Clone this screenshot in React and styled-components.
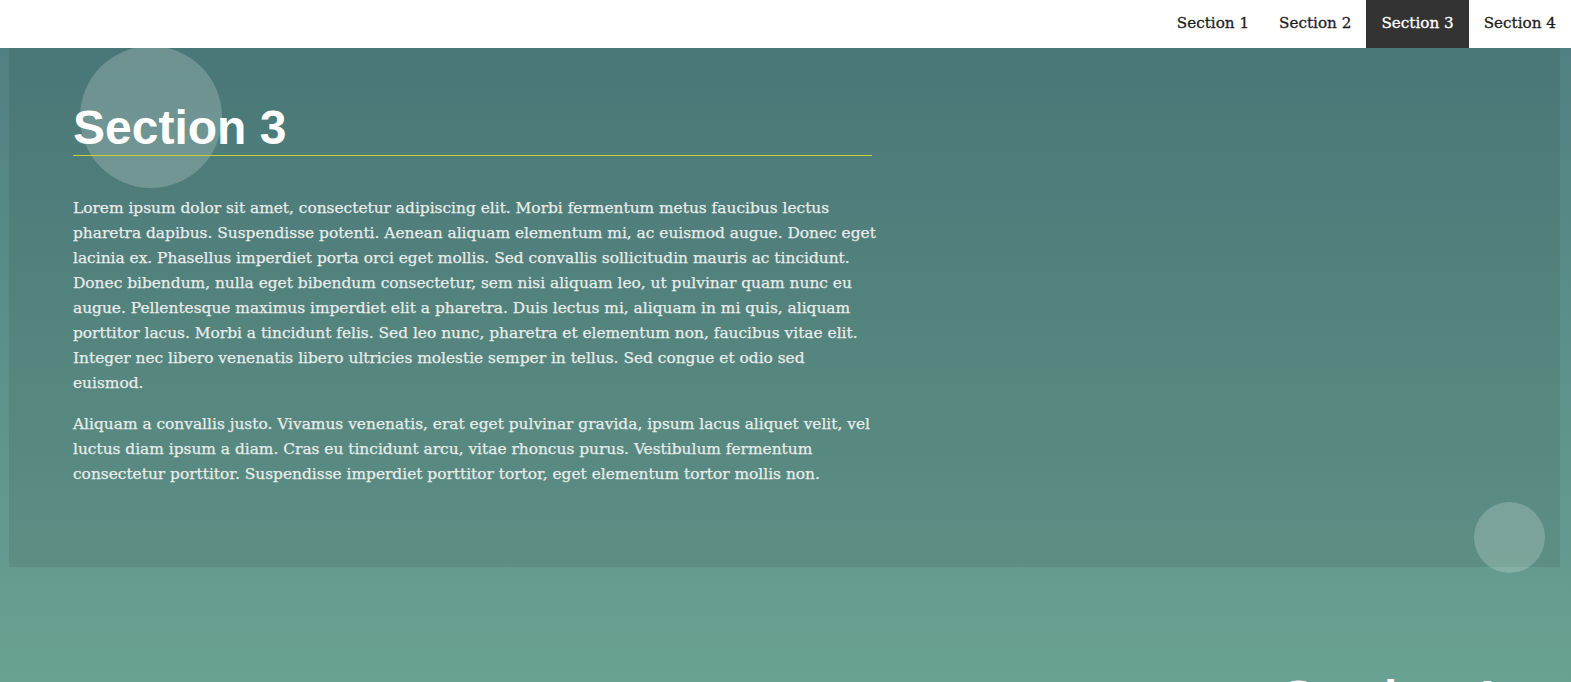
import React from "react";
import styled, { createGlobalStyle } from "styled-components";

const GlobalStyle = createGlobalStyle`
  html, body {
    margin: 0;
    padding: 0;
  }
  body {
    font-family: "DejaVu Serif", "Liberation Serif", serif;
    background: linear-gradient(180deg, #4e7e80 0%, #69a192 100%) fixed;
    min-height: 100vh;
    overflow: hidden;
  }
`;

const Header = styled.header`
  height: 48px;
  background: #fff;
  display: flex;
  justify-content: flex-end;
  position: relative;
  z-index: 2;
`;

const NavItem = styled.a`
  display: block;
  padding: 0 15px;
  line-height: 46px;
  font-size: 15.2px;
  color: ${(props) => (props.active ? "#fff" : "#1e1e1e")};
  background: ${(props) => (props.active ? "#333" : "transparent")};
  text-decoration: none;
  cursor: pointer;
  -webkit-text-stroke: 0.3px currentColor;
`;

const Main = styled.main`
  display: flex;
  flex-direction: column;
  gap: 51px;
`;

const Panel = styled.section`
  position: relative;
  margin: 0 11px 0 9px;
  min-height: 519px;
  box-sizing: border-box;
  padding: 56px 64px 40px;
  background: ${(props) => (props.active ? "rgba(0, 0, 0, 0.075)" : "transparent")};
  text-align: ${(props) => (props.right ? "right" : "left")};
  display: flex;
  flex-direction: column;
  align-items: ${(props) => (props.right ? "flex-end" : "flex-start")};
`;

const Bubble = styled.span`
  position: absolute;
  border-radius: 50%;
  background: rgba(255, 255, 255, 0.2);
  pointer-events: none;
`;

const Content = styled.div`
  position: relative;
  width: 799px;
`;

const Title = styled.h2`
  margin: 0;
  padding-bottom: 3px;
  font-family: "Liberation Sans", Arial, sans-serif;
  font-weight: 700;
  font-size: 48px;
  line-height: 48px;
  color: #fff;
  border-bottom: 1px solid ${(props) => (props.ruled ? "#c4cf34" : "transparent")};
`;

const Text = styled.p`
  margin: 0 0 16px;
  font-size: 15.4px;
  line-height: 25px;
  white-space: nowrap;
  color: #e9edeb;
  -webkit-text-stroke: 0.25px currentColor;
  &:first-of-type {
    margin-top: 40px;
  }
`;

const sections = [1, 2, 3, 4];

const paragraphs = [
  [
    "Lorem ipsum dolor sit amet, consectetur adipiscing elit. Morbi fermentum metus faucibus lectus",
    "pharetra dapibus. Suspendisse potenti. Aenean aliquam elementum mi, ac euismod augue. Donec eget",
    "lacinia ex. Phasellus imperdiet porta orci eget mollis. Sed convallis sollicitudin mauris ac tincidunt.",
    "Donec bibendum, nulla eget bibendum consectetur, sem nisi aliquam leo, ut pulvinar quam nunc eu",
    "augue. Pellentesque maximus imperdiet elit a pharetra. Duis lectus mi, aliquam in mi quis, aliquam",
    "porttitor lacus. Morbi a tincidunt felis. Sed leo nunc, pharetra et elementum non, faucibus vitae elit.",
    "Integer nec libero venenatis libero ultricies molestie semper in tellus. Sed congue et odio sed",
    "euismod.",
  ],
  [
    "Aliquam a convallis justo. Vivamus venenatis, erat eget pulvinar gravida, ipsum lacus aliquet velit, vel",
    "luctus diam ipsum a diam. Cras eu tincidunt arcu, vitae rhoncus purus. Vestibulum fermentum",
    "consectetur porttitor. Suspendisse imperdiet porttitor tortor, eget elementum tortor mollis non.",
  ],
];

export default function App() {
  return (
    <>
      <GlobalStyle />
      <Header>
        {sections.map((n) => (
          <NavItem key={n} active={n === 3}>
            Section {n}
          </NavItem>
        ))}
      </Header>
      <Main>
        <Panel active>
          <Bubble style={{ left: 71, top: -2, width: 142, height: 142 }} />
          <Bubble style={{ left: 1465, top: 454, width: 71, height: 71 }} />
          <Content>
            <Title ruled>Section 3</Title>
            {paragraphs.map((lines, i) => (
              <Text key={i}>
                {lines.map((line, j) => (
                  <React.Fragment key={j}>
                    {line}
                    {j < lines.length - 1 && <br />}
                  </React.Fragment>
                ))}
              </Text>
            ))}
          </Content>
        </Panel>
        <Panel right>
          <Title>Section 4</Title>
        </Panel>
      </Main>
    </>
  );
}
